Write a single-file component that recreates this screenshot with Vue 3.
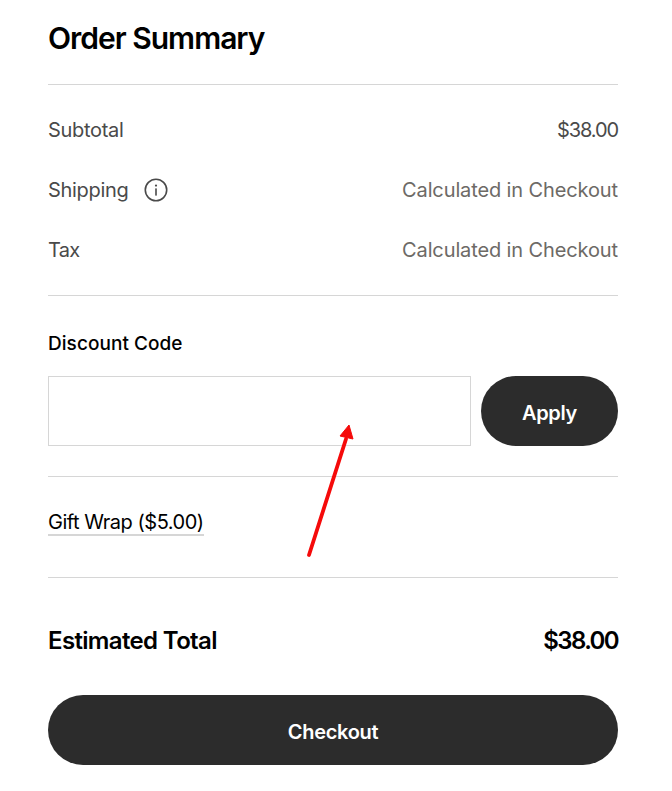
<template>
  <div class="order-summary">
    <h2 class="summary-title">Order Summary</h2>

    <div class="summary-rows">
      <div class="summary-row">
        <span>Subtotal</span>
        <span class="row-value">$38.00</span>
      </div>
      <div class="summary-row">
        <span class="row-label">
          Shipping
          <svg class="info-icon" viewBox="0 0 24 24" width="24" height="24" fill="none">
            <circle cx="12" cy="12" r="10.7" stroke="#4a4a4a" stroke-width="1.6" />
            <rect x="11.2" y="10.4" width="1.6" height="7.2" fill="#4a4a4a" />
            <circle cx="12" cy="7.6" r="1.1" fill="#4a4a4a" />
          </svg>
        </span>
        <span class="row-muted">Calculated in Checkout</span>
      </div>
      <div class="summary-row">
        <span class="row-tax">Tax</span>
        <span class="row-muted">Calculated in Checkout</span>
      </div>
    </div>

    <div class="discount">
      <label class="discount-label" for="discount-code">Discount Code</label>
      <div class="discount-form">
        <input id="discount-code" class="discount-input" type="text" />
        <button class="btn btn-apply" type="button">Apply</button>
      </div>
    </div>

    <div class="gift-wrap">
      <a class="gift-link">Gift Wrap ($5.00)</a>
    </div>

    <div class="total-row">
      <span>Estimated Total</span>
      <span class="total-value">$38.00</span>
    </div>

    <button class="btn btn-checkout" type="button">Checkout</button>

    <svg class="annotation-arrow" viewBox="0 0 60 140" width="60" height="140" fill="none">
      <line x1="10" y1="134" x2="47" y2="18" stroke="#f50a0a" stroke-width="3.8" stroke-linecap="round" />
      <polygon points="50,4 41,15 54,18" fill="#f50a0a" stroke="#f50a0a" stroke-width="1" />
    </svg>
  </div>
</template>

<script setup>
</script>

<style scoped>
.order-summary {
  position: relative;
  width: 570px;
  padding: 0 54px 26px 48px;
  font-family: Inter, "Liberation Sans", sans-serif;
  color: #000;
}

.summary-title {
  margin: 0;
  height: 85px;
  padding-top: 20px;
  box-sizing: border-box;
  font-size: 30px;
  line-height: 36px;
  font-weight: 600;
  letter-spacing: -1px;
  border-bottom: 1px solid #d6d6d6;
}

.summary-rows {
  padding: 15px 0;
  border-bottom: 1px solid #d6d6d6;
}

.summary-row {
  display: flex;
  justify-content: space-between;
  align-items: center;
  height: 60px;
  font-size: 20px;
  letter-spacing: -0.3px;
  color: #4a4a4a;
}

.row-label {
  display: flex;
  align-items: center;
  gap: 15px;
}

.info-icon {
  display: block;
}

.row-tax {
  letter-spacing: -0.7px;
}

.row-value {
  color: #4a4a4a;
  letter-spacing: -1.1px;
}

.row-muted {
  color: #6d6a66;
  letter-spacing: -0.12px;
}

.discount {
  padding-bottom: 30px;
  border-bottom: 1px solid #d6d6d6;
}

.discount-label {
  display: block;
  padding-top: 36px;
  height: 80px;
  box-sizing: border-box;
  font-size: 19px;
  line-height: 24px;
  font-weight: 500;
  letter-spacing: 0.05px;
}

.discount-form {
  display: flex;
  gap: 10px;
}

.discount-input {
  width: 423px;
  height: 70px;
  box-sizing: border-box;
  border: 1px solid #d6d6d6;
  border-radius: 0;
  background: #fff;
}

.btn {
  border: none;
  color: #fff;
  background: #2c2c2c;
  font-family: inherit;
  font-size: 20px;
  font-weight: 600;
  letter-spacing: -0.3px;
  padding: 3px 0 0;
}

.btn-apply {
  width: 137px;
  height: 70px;
  border-radius: 35px;
}

.gift-wrap {
  height: 101px;
  box-sizing: border-box;
  padding-top: 33px;
  border-bottom: 1px solid #d6d6d6;
}

.gift-link {
  display: inline-block;
  font-size: 20px;
  line-height: 24px;
  letter-spacing: -0.48px;
  color: #000;
  border-bottom: 2px solid #d6d6d6;
}

.total-row {
  display: flex;
  justify-content: space-between;
  align-items: center;
  height: 117px;
  padding-top: 8px;
  box-sizing: border-box;
  font-size: 24px;
  font-weight: 600;
  letter-spacing: -0.65px;
}

.total-value {
  letter-spacing: -1.6px;
}

.btn-checkout {
  display: block;
  width: 100%;
  height: 70px;
  border-radius: 35px;
}

.annotation-arrow {
  position: absolute;
  left: 299px;
  top: 421px;
}
</style>

<style>
html,
body {
  background: #fff;
}
</style>
